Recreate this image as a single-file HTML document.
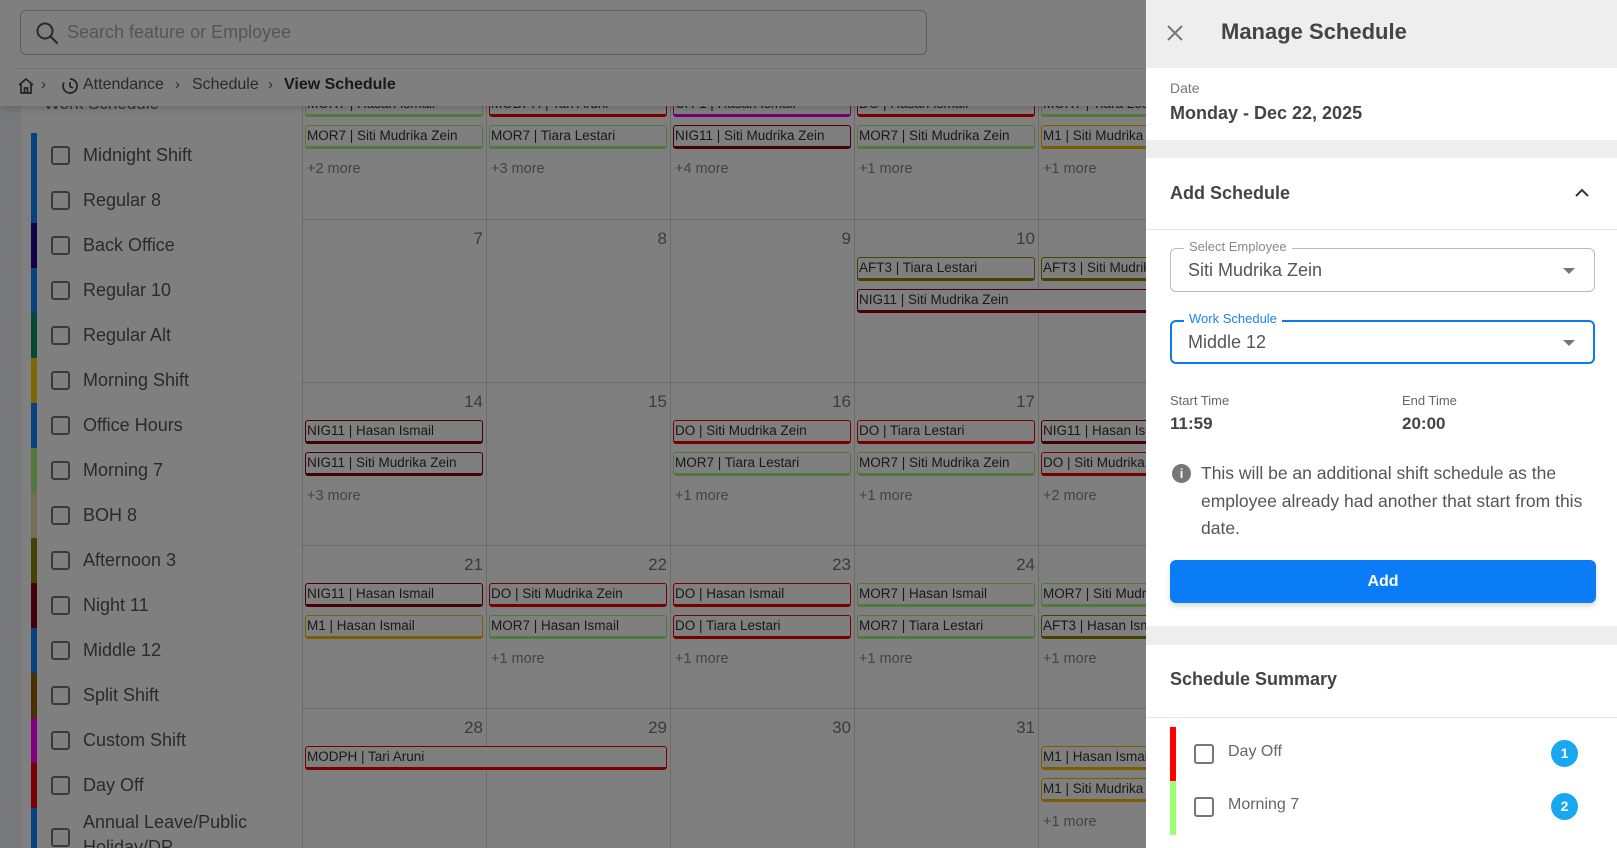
<!DOCTYPE html>
<html style="width:1617px;height:848px;overflow:hidden"><head><meta charset="utf-8"><style>
*{box-sizing:border-box;margin:0;padding:0}
body{width:1617px;height:848px;overflow:hidden;position:relative;background:#eef0f2;font-family:"Liberation Sans",sans-serif;color:#444}
.a{position:absolute}
.side{left:21px;top:90px;width:281px;height:758px;background:#fff;overflow:hidden}
.it{position:absolute;left:0;height:45px;width:281px}
.it .bar{position:absolute;left:10px;top:0;width:6px;height:45px}
.it .cb{position:absolute;left:30px;top:13px;width:19px;height:19px;border:2px solid #777;border-radius:3px}
.it .t{position:absolute;left:62px;top:12px;font-size:18px;color:#555;white-space:nowrap}
.cal{left:302px;top:40px;width:920px;height:808px;background:#fff}
.vl{position:absolute;top:40px;width:1px;height:808px;background:#d6d6d6}
.hl{position:absolute;left:302px;width:920px;height:1px;background:#d6d6d6}
.ev{position:absolute;width:178px;height:24px;border:1px solid;border-bottom-width:3px;border-radius:3px;background:#fff;font-size:13.5px;line-height:20px;padding-left:1px;color:#333;white-space:nowrap;overflow:hidden}
.g{border-color:#a6f07c}.r{border-color:#f00000}.d{border-color:#8a0012}.y{border-color:#f5bb00}.o{border-color:#8f8400}.m{border-color:#e600e6}
.mo{position:absolute;font-size:14.5px;color:#888}
.n{position:absolute;width:60px;text-align:right;font-size:17px;color:#777}
.ov{left:0;top:0;width:1146px;height:848px;background:rgba(0,0,0,.5)}
.pn{left:1146px;top:0;width:471px;height:848px;background:#fff;overflow:hidden}
</style></head><body>

<!-- sidebar -->
<div class="a side">
 <div class="a" style="left:23px;top:4px;font-size:17px;color:#666">Work Schedule</div>
 <div class="it" style="top:43px"><div class="bar" style="background:#0a84ff"></div><div class="cb"></div><div class="t">Midnight Shift</div></div>
 <div class="it" style="top:88px"><div class="bar" style="background:#0a84ff"></div><div class="cb"></div><div class="t">Regular 8</div></div>
 <div class="it" style="top:133px"><div class="bar" style="background:#22008e"></div><div class="cb"></div><div class="t">Back Office</div></div>
 <div class="it" style="top:178px"><div class="bar" style="background:#0a84ff"></div><div class="cb"></div><div class="t">Regular 10</div></div>
 <div class="it" style="top:223px"><div class="bar" style="background:#0a9070"></div><div class="cb"></div><div class="t">Regular Alt</div></div>
 <div class="it" style="top:268px"><div class="bar" style="background:#ffcc00"></div><div class="cb"></div><div class="t">Morning Shift</div></div>
 <div class="it" style="top:313px"><div class="bar" style="background:#0a84ff"></div><div class="cb"></div><div class="t">Office Hours</div></div>
 <div class="it" style="top:358px"><div class="bar" style="background:#a6f07c"></div><div class="cb"></div><div class="t">Morning 7</div></div>
 <div class="it" style="top:403px"><div class="bar" style="background:#f0d8b0"></div><div class="cb"></div><div class="t">BOH 8</div></div>
 <div class="it" style="top:448px"><div class="bar" style="background:#8f8400"></div><div class="cb"></div><div class="t">Afternoon 3</div></div>
 <div class="it" style="top:493px"><div class="bar" style="background:#8a0012"></div><div class="cb"></div><div class="t">Night 11</div></div>
 <div class="it" style="top:538px"><div class="bar" style="background:#0a84ff"></div><div class="cb"></div><div class="t">Middle 12</div></div>
 <div class="it" style="top:583px"><div class="bar" style="background:#946000"></div><div class="cb"></div><div class="t">Split Shift</div></div>
 <div class="it" style="top:628px"><div class="bar" style="background:#ff00ff"></div><div class="cb"></div><div class="t">Custom Shift</div></div>
 <div class="it" style="top:673px"><div class="bar" style="background:#f00000"></div><div class="cb"></div><div class="t">Day Off</div></div>
 <div class="it" style="top:718px;height:60px"><div class="bar" style="background:#0a84ff;height:60px"></div><div class="cb" style="top:20px"></div><div class="t" style="top:2px;line-height:25px">Annual Leave/Public<br>Holiday/DP</div></div>
</div>

<!-- calendar -->
<div class="a cal"></div>
<div class="vl" style="left:302px"></div><div class="vl" style="left:486px"></div><div class="vl" style="left:670px"></div><div class="vl" style="left:854px"></div><div class="vl" style="left:1038px"></div>
<div class="hl" style="top:219px"></div><div class="hl" style="top:382px"></div><div class="hl" style="top:545px"></div><div class="hl" style="top:708px"></div>

<!-- row1 -->
<div class="ev g" style="left:305px;top:93px">MOR7 | Hasan Ismail</div>
<div class="ev g" style="left:305px;top:125px">MOR7 | Siti Mudrika Zein</div>
<div class="mo" style="left:307px;top:161px">+2 more</div>
<div class="ev r" style="left:489px;top:93px">MODPH | Tari Aruni</div>
<div class="ev g" style="left:489px;top:125px">MOR7 | Tiara Lestari</div>
<div class="mo" style="left:491px;top:161px">+3 more</div>
<div class="ev m" style="left:673px;top:93px">CH-1 | Hasan Ismail</div>
<div class="ev d" style="left:673px;top:125px">NIG11 | Siti Mudrika Zein</div>
<div class="mo" style="left:675px;top:161px">+4 more</div>
<div class="ev r" style="left:857px;top:93px">DO | Hasan Ismail</div>
<div class="ev g" style="left:857px;top:125px">MOR7 | Siti Mudrika Zein</div>
<div class="mo" style="left:859px;top:161px">+1 more</div>
<div class="ev g" style="left:1041px;top:93px">MOR7 | Tiara Lestari</div>
<div class="ev y" style="left:1041px;top:125px">M1 | Siti Mudrika Zein</div>
<div class="mo" style="left:1043px;top:161px">+1 more</div>

<!-- row2 -->
<div class="n" style="left:423px;top:229px">7</div><div class="n" style="left:607px;top:229px">8</div><div class="n" style="left:791px;top:229px">9</div><div class="n" style="left:975px;top:229px">10</div>
<div class="ev o" style="left:857px;top:257px">AFT3 | Tiara Lestari</div>
<div class="ev o" style="left:1041px;top:257px">AFT3 | Siti Mudrika Zein</div>
<div class="ev d" style="left:857px;top:289px;width:300px">NIG11 | Siti Mudrika Zein</div>

<!-- row3 -->
<div class="n" style="left:423px;top:392px">14</div><div class="n" style="left:607px;top:392px">15</div><div class="n" style="left:791px;top:392px">16</div><div class="n" style="left:975px;top:392px">17</div>
<div class="ev d" style="left:305px;top:420px">NIG11 | Hasan Ismail</div>
<div class="ev d" style="left:305px;top:452px">NIG11 | Siti Mudrika Zein</div>
<div class="mo" style="left:307px;top:488px">+3 more</div>
<div class="ev r" style="left:673px;top:420px">DO | Siti Mudrika Zein</div>
<div class="ev g" style="left:673px;top:452px">MOR7 | Tiara Lestari</div>
<div class="mo" style="left:675px;top:488px">+1 more</div>
<div class="ev r" style="left:857px;top:420px">DO | Tiara Lestari</div>
<div class="ev g" style="left:857px;top:452px">MOR7 | Siti Mudrika Zein</div>
<div class="mo" style="left:859px;top:488px">+1 more</div>
<div class="ev d" style="left:1041px;top:420px">NIG11 | Hasan Ismail</div>
<div class="ev r" style="left:1041px;top:452px">DO | Siti Mudrika Zein</div>
<div class="mo" style="left:1043px;top:488px">+2 more</div>

<!-- row4 -->
<div class="n" style="left:423px;top:555px">21</div><div class="n" style="left:607px;top:555px">22</div><div class="n" style="left:791px;top:555px">23</div><div class="n" style="left:975px;top:555px">24</div>
<div class="ev d" style="left:305px;top:583px">NIG11 | Hasan Ismail</div>
<div class="ev y" style="left:305px;top:615px">M1 | Hasan Ismail</div>
<div class="ev r" style="left:489px;top:583px">DO | Siti Mudrika Zein</div>
<div class="ev g" style="left:489px;top:615px">MOR7 | Hasan Ismail</div>
<div class="mo" style="left:491px;top:651px">+1 more</div>
<div class="ev r" style="left:673px;top:583px">DO | Hasan Ismail</div>
<div class="ev r" style="left:673px;top:615px">DO | Tiara Lestari</div>
<div class="mo" style="left:675px;top:651px">+1 more</div>
<div class="ev g" style="left:857px;top:583px">MOR7 | Hasan Ismail</div>
<div class="ev g" style="left:857px;top:615px">MOR7 | Tiara Lestari</div>
<div class="mo" style="left:859px;top:651px">+1 more</div>
<div class="ev g" style="left:1041px;top:583px">MOR7 | Siti Mudrika Zein</div>
<div class="ev o" style="left:1041px;top:615px">AFT3 | Hasan Ismail</div>
<div class="mo" style="left:1043px;top:651px">+1 more</div>

<!-- row5 -->
<div class="n" style="left:423px;top:718px">28</div><div class="n" style="left:607px;top:718px">29</div><div class="n" style="left:791px;top:718px">30</div><div class="n" style="left:975px;top:718px">31</div>
<div class="ev r" style="left:305px;top:746px;width:362px">MODPH | Tari Aruni</div>
<div class="ev y" style="left:1041px;top:746px">M1 | Hasan Ismail</div>
<div class="ev y" style="left:1041px;top:778px">M1 | Siti Mudrika Zein</div>
<div class="mo" style="left:1043px;top:814px">+1 more</div>

<!-- header -->
<div class="a" style="left:0;top:0;width:1146px;height:106px;background:#fff;box-shadow:0 3px 6px rgba(0,0,0,.15)"></div>
<div class="a" style="left:20px;top:10px;width:907px;height:45px;border:1px solid #bbb;border-radius:6px"></div>
<svg class="a" style="left:35px;top:21px" width="24" height="24" viewBox="0 0 24 24"><circle cx="10" cy="10" r="7.5" fill="none" stroke="#555" stroke-width="2"/><path d="M15.5 15.5L22 22" stroke="#555" stroke-width="2.2" stroke-linecap="round"/></svg>
<div class="a" style="left:67px;top:22px;font-size:18px;color:#aaa">Search feature or Employee</div>
<div class="a" style="left:15px;top:68px;width:1131px;height:1px;background:#e6e6e6"></div>
<svg class="a" style="left:17px;top:77px" width="18" height="18" viewBox="0 0 18 18"><path d="M2 8L9 2L16 8M4 6.5V16H14V6.5M7.5 16V11H10.5V16" fill="none" stroke="#444" stroke-width="1.7"/></svg>
<div class="a" style="left:41px;top:76px;font-size:15px;color:#555">›</div>
<svg class="a" style="left:61px;top:77px" width="18" height="18" viewBox="0 0 18 18"><path d="M9 2A7 7 0 1 1 3 5.5" fill="none" stroke="#444" stroke-width="1.7"/><path d="M9 5V9.5L12 11" fill="none" stroke="#444" stroke-width="1.7"/></svg>
<div class="a" style="left:83px;top:76px;font-size:16px;color:#555">Attendance</div>
<div class="a" style="left:175px;top:76px;font-size:15px;color:#555">›</div>
<div class="a" style="left:192px;top:76px;font-size:16px;color:#555">Schedule</div>
<div class="a" style="left:268px;top:76px;font-size:15px;color:#555">›</div>
<div class="a" style="left:284px;top:76px;font-size:16px;color:#333;font-weight:bold">View Schedule</div>

<div class="a ov"></div>

<!-- panel -->
<div class="a pn">
 <div class="a" style="left:0;top:0;width:471px;height:68px;background:#eee"></div>
 <svg class="a" style="left:20px;top:24px" width="18" height="18" viewBox="0 0 18 18"><path d="M2 2L16 16M16 2L2 16" stroke="#777" stroke-width="2"/></svg>
 <div class="a" style="left:75px;top:19px;font-size:22px;font-weight:bold;color:#444">Manage Schedule</div>
 <div class="a" style="left:24px;top:80px;font-size:14px;color:#777">Date</div>
 <div class="a" style="left:24px;top:103px;font-size:18px;font-weight:bold;color:#444">Monday - Dec 22, 2025</div>
 <div class="a" style="left:0;top:140px;width:471px;height:18px;background:#eee"></div>
 <div class="a" style="left:24px;top:183px;font-size:18px;font-weight:bold;color:#444">Add Schedule</div>
 <svg class="a" style="left:428px;top:187px" width="16" height="12" viewBox="0 0 16 12"><path d="M2 9L8 3L14 9" fill="none" stroke="#333" stroke-width="2"/></svg>
 <div class="a" style="left:0;top:229px;width:471px;height:1px;background:#e6e6e6"></div>
 <div class="a" style="left:24px;top:248px;width:425px;height:44px;border:1px solid #bbb;border-radius:6px"></div>
 <div class="a" style="left:38px;top:239px;padding:0 5px;background:#fff;font-size:13px;color:#888">Select Employee</div>
 <div class="a" style="left:42px;top:260px;font-size:18px;color:#555">Siti Mudrika Zein</div>
 <div class="a" style="left:417px;top:268px;border-left:6px solid transparent;border-right:6px solid transparent;border-top:6px solid #777"></div>
 <div class="a" style="left:24px;top:320px;width:425px;height:44px;border:2px solid #0a7cf0;border-radius:6px"></div>
 <div class="a" style="left:38px;top:311px;padding:0 5px;background:#fff;font-size:13px;color:#1a84f0">Work Schedule</div>
 <div class="a" style="left:42px;top:332px;font-size:18px;color:#555">Middle 12</div>
 <div class="a" style="left:417px;top:340px;border-left:6px solid transparent;border-right:6px solid transparent;border-top:6px solid #777"></div>
 <div class="a" style="left:24px;top:393px;font-size:13px;color:#666">Start Time</div>
 <div class="a" style="left:24px;top:414px;font-size:17px;font-weight:bold;color:#444">11:59</div>
 <div class="a" style="left:256px;top:393px;font-size:13px;color:#666">End Time</div>
 <div class="a" style="left:256px;top:414px;font-size:17px;font-weight:bold;color:#444">20:00</div>
 <div class="a" style="left:26px;top:464px;width:19px;height:19px;border-radius:50%;background:#777;color:#fff;font-size:13px;font-weight:bold;text-align:center;line-height:19px">i</div>
 <div class="a" style="left:55px;top:460px;width:395px;font-size:17.5px;line-height:27.5px;color:#555">This will be an additional shift schedule as the employee already had another that start from this date.</div>
 <div class="a" style="left:24px;top:560px;width:426px;height:43px;background:#0a7cf5;border-radius:6px;box-shadow:0 3px 6px rgba(0,0,0,.15);color:#fff;font-weight:bold;font-size:16px;text-align:center;line-height:43px">Add</div>
 <div class="a" style="left:0;top:626px;width:471px;height:19px;background:#eee"></div>
 <div class="a" style="left:24px;top:669px;font-size:18px;font-weight:bold;color:#444">Schedule Summary</div>
 <div class="a" style="left:0;top:717px;width:471px;height:1px;background:#e6e6e6"></div>
 <div class="a" style="left:24px;top:727px;width:6px;height:54px;background:#f00"></div>
 <div class="a" style="left:24px;top:781px;width:6px;height:54px;background:#a0ff70"></div>
 <div class="a" style="left:48px;top:744px;width:20px;height:20px;border:2px solid #777;border-radius:3px"></div>
 <div class="a" style="left:82px;top:743px;font-size:16px;color:#666">Day Off</div>
 <div class="a" style="left:405px;top:740px;width:27px;height:27px;border-radius:50%;background:#18a8f0;color:#fff;font-size:14px;font-weight:bold;text-align:center;line-height:27px">1</div>
 <div class="a" style="left:48px;top:797px;width:20px;height:20px;border:2px solid #777;border-radius:3px"></div>
 <div class="a" style="left:82px;top:796px;font-size:16px;color:#666">Morning 7</div>
 <div class="a" style="left:405px;top:793px;width:27px;height:27px;border-radius:50%;background:#18a8f0;color:#fff;font-size:14px;font-weight:bold;text-align:center;line-height:27px">2</div>
</div>
</body></html>
